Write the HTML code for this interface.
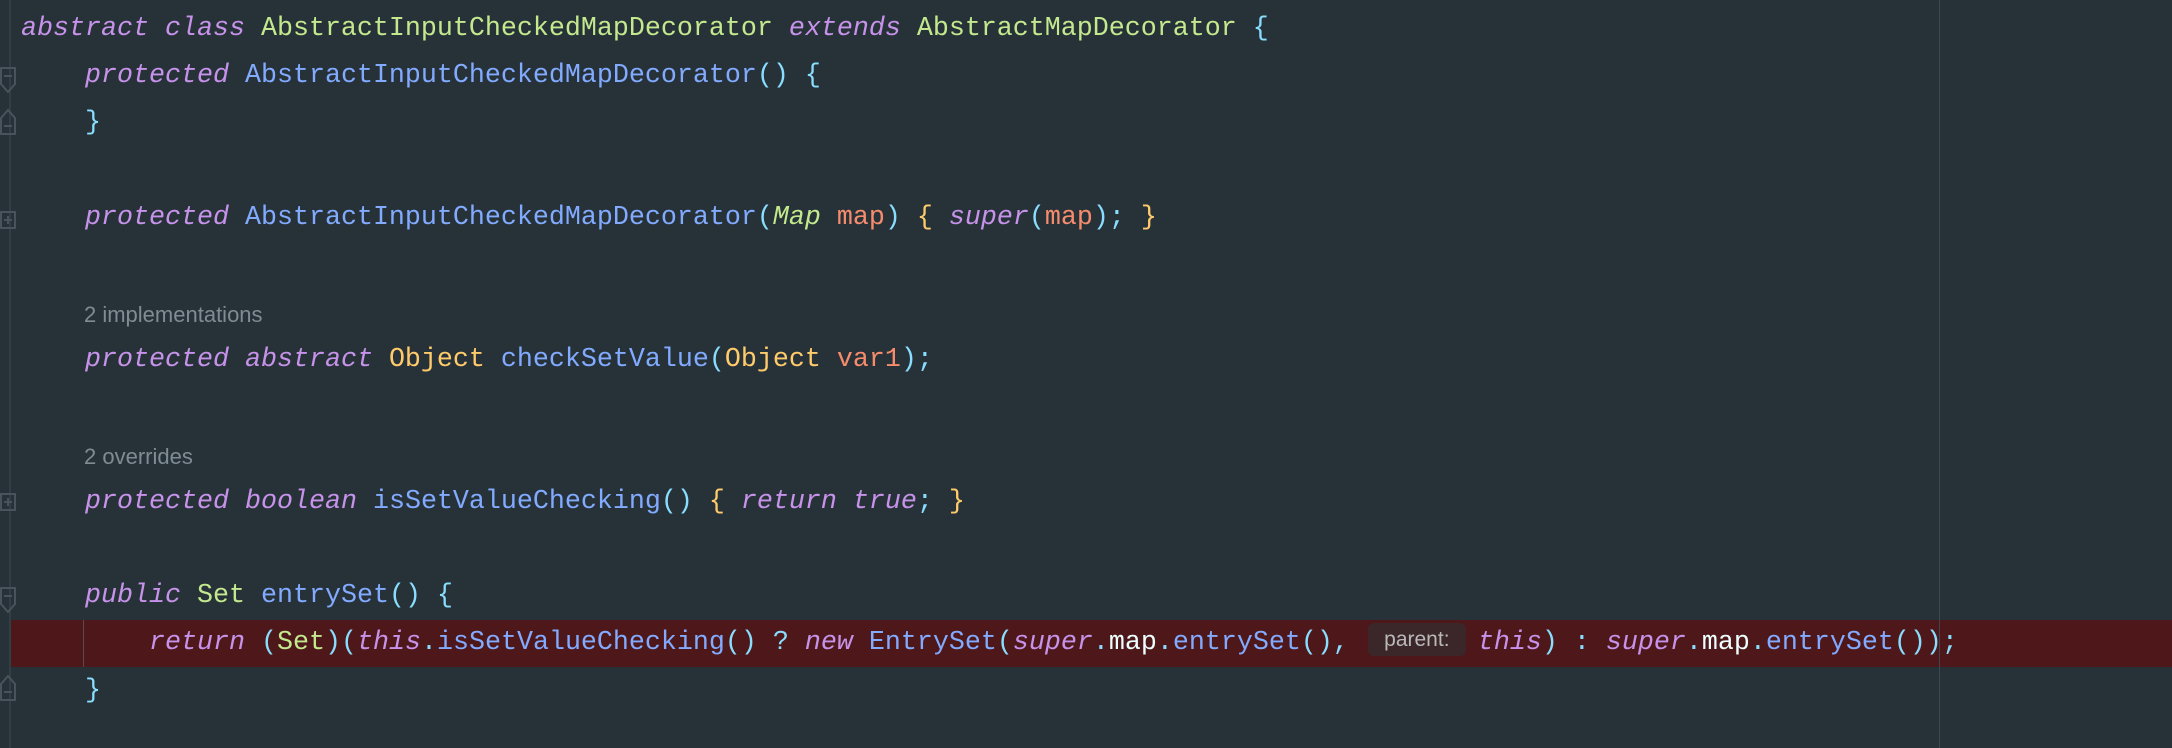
<!DOCTYPE html>
<html><head><meta charset="utf-8"><style>
html,body{margin:0;padding:0}
body{width:2172px;height:748px;background:#263238;position:relative;overflow:hidden;font-family:"Liberation Mono",monospace;}
.l{position:absolute;left:21px;height:47px;line-height:47px;font-size:26.67px;white-space:pre;color:#eeffff;letter-spacing:0}
.mono{font-family:"Liberation Mono",monospace;font-size:26.67px}
.k{color:#c792ea;font-style:italic}
.c{color:#c3e88d}
.ci{color:#c3e88d;font-style:italic}
.m{color:#82aaff}
.p{color:#89ddff}
.y{color:#ffcb6b}
.o{color:#f78c6c}
.w{color:#eeffff}
.hint{font-family:"Liberation Sans",sans-serif;font-size:22px;color:#7f8c93;position:absolute;left:84px}
.hl{position:absolute;left:10px;right:0;top:620px;height:47px;background:#4e1719}
.ph{display:inline-block;width:98px;height:33px;line-height:33px;background:#3b2729;border-radius:6px;margin-left:3px;margin-right:12px;vertical-align:middle;font-family:"Liberation Sans",sans-serif;font-size:21px;color:#b9b9b9;text-align:center;font-style:normal;position:relative;top:-2px}
</style></head><body>
<div class="hl"></div>
<div style="position:absolute;left:9px;top:0;width:2px;height:748px;background:#323e45"></div>
<div style="position:absolute;left:1939px;top:0;width:1px;height:748px;background:#3a4850"></div>
<div style="position:absolute;left:83px;top:620px;width:1px;height:47px;background:#5a4a4c"></div>
<svg style="position:absolute;left:0;top:0" width="20" height="748">
<g fill="none" stroke="#48545b" stroke-width="2">
<path d="M1 68 H15 V84 L8 92 L1 84 Z"/><path d="M4 76 H12"/>
<path d="M1 134 H15 V118 L8 110 L1 118 Z"/><path d="M4 126 H12"/>
<path d="M1 212 H15 V228 H1 Z"/><path d="M4 220 H12 M8 216 V224"/>
<path d="M1 494 H15 V510 H1 Z"/><path d="M4 502 H12 M8 498 V506"/>
<path d="M1 588 H15 V604 L8 612 L1 604 Z"/><path d="M4 596 H12"/>
<path d="M1 700 H15 V684 L8 676 L1 684 Z"/><path d="M4 692 H12"/>
</g></svg>
<div class="l mono" style="top:6px"><span class="k">abstract class</span> <span class="c">AbstractInputCheckedMapDecorator</span> <span class="k">extends</span> <span class="c">AbstractMapDecorator</span> <span class="p">{</span></div>
<div class="l mono" style="top:53px">    <span class="k">protected</span> <span class="m">AbstractInputCheckedMapDecorator</span><span class="p">() {</span></div>
<div class="l mono" style="top:100px">    <span class="p">}</span></div>
<div class="l mono" style="top:195px">    <span class="k">protected</span> <span class="m">AbstractInputCheckedMapDecorator</span><span class="p">(</span><span class="ci">Map</span> <span class="o">map</span><span class="p">)</span> <span class="y">{</span> <span class="k">super</span><span class="p">(</span><span class="o">map</span><span class="p">);</span> <span class="y">}</span></div>
<div class="hint" style="top:302px">2 implementations</div>
<div class="l mono" style="top:337px">    <span class="k">protected abstract</span> <span class="y">Object</span> <span class="m">checkSetValue</span><span class="p">(</span><span class="y">Object</span> <span class="o">var1</span><span class="p">);</span></div>
<div class="hint" style="top:444px">2 overrides</div>
<div class="l mono" style="top:479px">    <span class="k">protected boolean</span> <span class="m">isSetValueChecking</span><span class="p">()</span> <span class="y">{</span> <span class="k">return true</span><span class="p">;</span> <span class="y">}</span></div>
<div class="l mono" style="top:573px">    <span class="k">public</span> <span class="c">Set</span> <span class="m">entrySet</span><span class="p">() {</span></div>
<div class="l mono" style="top:620px">        <span class="k">return</span> <span class="p">(</span><span class="c">Set</span><span class="p">)(</span><span class="k">this</span><span class="p">.</span><span class="m">isSetValueChecking</span><span class="p">() ?</span> <span class="k">new</span> <span class="m">EntrySet</span><span class="p">(</span><span class="k">super</span><span class="p">.</span><span class="w">map</span><span class="p">.</span><span class="m">entrySet</span><span class="p">(),</span> <span class="ph">parent:</span><span class="k">this</span><span class="p">) :</span> <span class="k">super</span><span class="p">.</span><span class="w">map</span><span class="p">.</span><span class="m">entrySet</span><span class="p">());</span></div>
<div class="l mono" style="top:668px">    <span class="p">}</span></div>
</body></html>
